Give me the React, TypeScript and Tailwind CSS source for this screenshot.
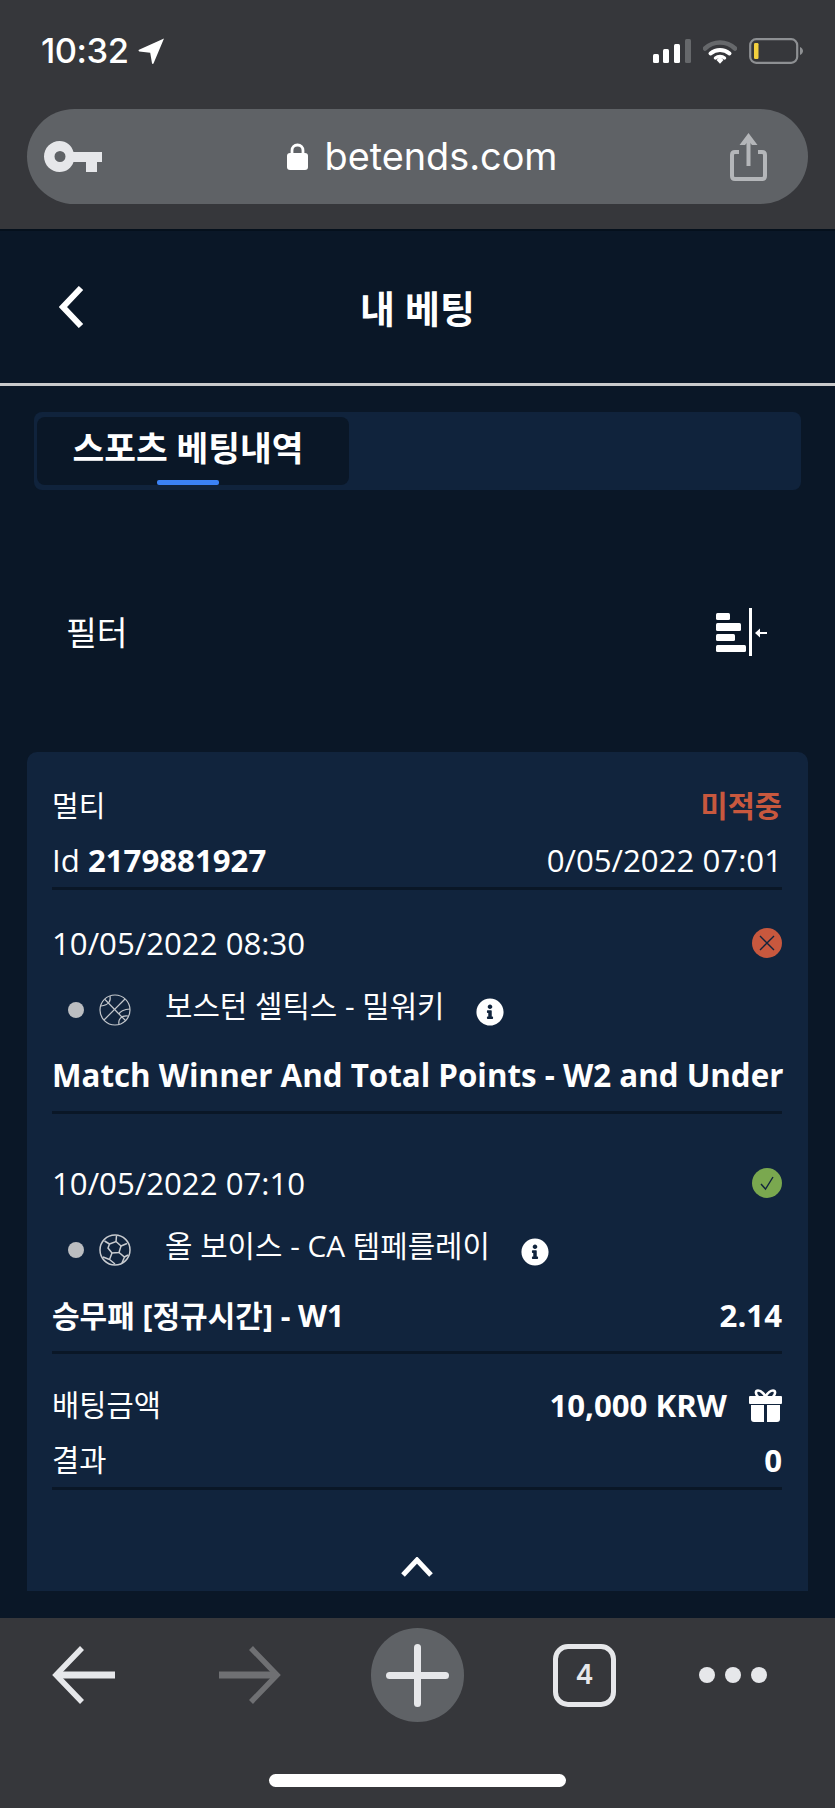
import React from "react";
import { FaInfoCircle } from "react-icons/fa";

const KO = "font-['Open_Sans','Noto_Sans_CJK_KR',sans-serif]";

function Signal() {
  return (
    <svg width="38" height="24" viewBox="0 0 38 24" aria-hidden="true">
      <rect x="0" y="15" width="6" height="9" rx="1.5" fill="#fff" />
      <rect x="10" y="10" width="6" height="14" rx="1.5" fill="#fff" />
      <rect x="21" y="5" width="6" height="19" rx="1.5" fill="#fff" />
      <rect x="32" y="0" width="6" height="24" rx="1.5" fill="#66686b" />
    </svg>
  );
}

function Wifi() {
  return (
    <svg width="34" height="25" viewBox="0 0 34 25" fill="none" aria-hidden="true">
      <path d="M2 9.5C10.5 1.5 23.5 1.5 32 9.5" stroke="#66686b" strokeWidth="4.5" strokeLinecap="round" />
      <path d="M7.5 14.5C13 9.7 21 9.7 26.5 14.5" stroke="#fff" strokeWidth="4" strokeLinecap="round" />
      <path d="M12.5 19C15 17 19 17 21.5 19" stroke="#fff" strokeWidth="3.5" strokeLinecap="round" />
      <path d="M13.5 21L17 17.5L20.5 21L17 24.8Z" fill="#fff" />
    </svg>
  );
}

function Battery() {
  return (
    <svg width="54" height="26" viewBox="0 0 54 26" fill="none" aria-hidden="true">
      <rect x="1.2" y="1.2" width="47" height="23.6" rx="6" stroke="#8e9093" strokeWidth="2.2" />
      <rect x="5" y="5" width="4.5" height="16" rx="1.2" fill="#f3d03e" />
      <path d="M51 9C53 10 54 11.5 54 13C54 14.5 53 16 51 17Z" fill="#8e9093" />
    </svg>
  );
}

function LocationArrow() {
  return (
    <svg width="27" height="26" viewBox="0 0 27 26" aria-hidden="true">
      <path d="M26 0.5L15.5 25.5C15.1 26.2 14.1 26 14 25.2L12.2 14.8L1.3 13.4C0.4 13.2 0.3 12.2 1 11.8Z" fill="#fff" />
    </svg>
  );
}

function KeyIcon() {
  return (
    <svg width="58" height="31" viewBox="0 0 58 31" aria-hidden="true">
      <path
        fillRule="evenodd"
        d="M15.5 0C22.5 0 27.5 4 29.5 11H58V21H53V31H42V21H29.5C27.5 27 22.5 31 15.5 31C7 31 0 24 0 15.5C0 7 7 0 15.5 0ZM16 10A5.5 5.5 0 1 0 16 21A5.5 5.5 0 1 0 16 10Z"
        fill="#e6e7ea"
      />
    </svg>
  );
}

function LockIcon() {
  return (
    <svg width="21" height="27" viewBox="0 0 21 27" fill="none" aria-hidden="true">
      <path d="M5 11V7.5C5 4.2 7.3 2 10.5 2C13.7 2 16 4.2 16 7.5V11" stroke="#fff" strokeWidth="2.8" />
      <rect x="0" y="10" width="21" height="17" rx="3" fill="#fff" />
    </svg>
  );
}

function ShareIcon() {
  return (
    <svg width="37" height="48" viewBox="0 0 37 48" fill="none" aria-hidden="true">
      <path d="M9 19H5C3 19 2 20 2 22V43C2 45 3 46 5 46H32C34 46 35 45 35 43V22C35 20 34 19 32 19H28" stroke="#b4b6b9" strokeWidth="4" />
      <path d="M18.5 33V4" stroke="#b4b6b9" strokeWidth="4" />
      <path d="M18.5 0L27.5 12H22L18.5 8L15 12H9.5Z" fill="#b4b6b9" />
    </svg>
  );
}

function FilterIcon() {
  return (
    <svg width="51" height="48" viewBox="0 0 51 48" aria-hidden="true">
      <rect x="0" y="5" width="14" height="7" rx="1.5" fill="#fff" />
      <rect x="0" y="15" width="25" height="8" rx="1.5" fill="#fff" />
      <rect x="0" y="26" width="19" height="7" rx="1.5" fill="#fff" />
      <rect x="0" y="37" width="30" height="7" rx="1.5" fill="#fff" />
      <rect x="33" y="0" width="3" height="48" fill="#fff" />
      <rect x="42" y="24" width="9" height="2" fill="#fff" />
      <path d="M39 25L44 20.5V29.5Z" fill="#fff" />
    </svg>
  );
}

function Basketball() {
  return (
    <svg width="32" height="32" viewBox="0 0 32 32" fill="none" stroke="#c3c7cc" strokeWidth="1.2" aria-hidden="true">
      <circle cx="16" cy="16" r="15" />
      <path d="M26 5L5 26" />
      <path d="M6 5.5L19 19L27 27" />
      <path d="M11 2C12 7 10 11 2 12" />
      <path d="M31 15C25 15 20.5 18 20 20" />
      <path d="M20 30C19 26 22 21 29 22" />
    </svg>
  );
}

function SoccerBall() {
  return (
    <svg width="32" height="32" viewBox="0 0 32 32" fill="none" stroke="#c9ccd0" strokeWidth="1.5" aria-hidden="true">
      <circle cx="16" cy="16" r="15" />
      <path d="M10.5 10L17 7.5L22 12L20 18.5L13 19L9 14Z" />
      <path d="M17 7.5L17.5 2M10.5 10L5.5 7M22 12L28 9.5M20 18.5L25.5 23L29 21M13 19L10.5 25.5L4 23M25.5 23L23 29M10.5 25.5L16 30" />
    </svg>
  );
}

function GiftIcon() {
  return (
    <svg width="33" height="33" viewBox="0 0 33 33" fill="none" aria-hidden="true">
      <path d="M16.5 7.5C14 3.5 11 1.5 9 1.5C6.5 1.5 6 5 9 7.5M16.5 7.5C19 3.5 22 1.5 24 1.5C26.5 1.5 27 5 24 7.5" stroke="#fff" strokeWidth="2.6" />
      <rect x="0" y="7" width="33" height="8" rx="1" fill="#fff" />
      <path d="M2 16H15V33H5C3 33 2 32 2 30Z" fill="#fff" />
      <path d="M18 16H31V30C31 32 30 33 28 33H18Z" fill="#fff" />
    </svg>
  );
}

function Chevron({ up }: { up?: boolean }) {
  return up ? (
    <svg width="32" height="20" viewBox="0 0 32 20" fill="none" aria-hidden="true">
      <path d="M2 18L16 3L30 18" stroke="#fff" strokeWidth="5" />
    </svg>
  ) : (
    <svg width="25" height="42" viewBox="0 0 25 42" fill="none" aria-hidden="true">
      <path d="M22 2L4 21L22 40" stroke="#fff" strokeWidth="6" />
    </svg>
  );
}

function StatusMark({ ok }: { ok?: boolean }) {
  return (
    <span className={`flex h-[30px] w-[30px] items-center justify-center rounded-full ${ok ? "bg-[#7aa84f]" : "bg-[#c8583e]"}`}>
      <svg width="20" height="20" viewBox="0 0 20 20" fill="none" stroke="#11243d" strokeWidth="1.4" aria-hidden="true">
        {ok ? <path d="M4 11L8.5 16L16 4" /> : <path d="M3 3L17 17M17 3L3 17" />}
      </svg>
    </span>
  );
}

function Rule() {
  return <div className="h-[3px] bg-[#0a1727]" />;
}

function Bet({
  first,
  date,
  ok,
  ball,
  teams,
  market,
  odds,
}: {
  first?: boolean;
  date: string;
  ok?: boolean;
  ball: React.ReactNode;
  teams: string;
  market: string;
  odds?: string;
}) {
  return (
    <div className={first ? "mt-[35px]" : "mt-[51px]"}>
      <div className="flex h-[36px] items-center justify-between">
        <span>{date}</span>
        <StatusMark ok={ok} />
      </div>
      <div className="mt-[33px] flex h-[32px] items-center pl-[16px]">
        <span className="h-[16px] w-[16px] rounded-full bg-[#bcbec1]" />
        <span className="ml-[15px]">{ball}</span>
        <span className="mb-[8px] ml-[34px] whitespace-nowrap text-[29.8px]">{teams}</span>
        <FaInfoCircle className="ml-[31px] mt-[4px] text-[28px] text-white" />
      </div>
      <div className="mt-[29px] flex h-[40px] items-center justify-between whitespace-nowrap font-bold">
        <span className={odds ? "text-[30px]" : "text-[31.3px]"}>{market}</span>
        {odds ? <span>{odds}</span> : null}
      </div>
      <div className="mt-[16px]">
        <Rule />
      </div>
    </div>
  );
}

export default function App() {
  return (
    <div className={`flex h-[1808px] w-[835px] flex-col overflow-hidden bg-[#0a1727] text-white ${KO}`}>
      {/* browser chrome */}
      <div className="flex h-[231px] shrink-0 flex-col border-b-2 border-[#05101c] bg-[#36373b] pt-[36px]">
        <div className="flex h-[30px] items-center justify-between pl-[41px] pr-[32px]">
          <div className="flex items-center gap-[10px]">
            <span className="font-['Inter',sans-serif] text-[34.5px] font-medium leading-none tracking-[-0.5px]">10:32</span>
            <LocationArrow />
          </div>
          <div className="flex items-center gap-[12px]">
            <Signal />
            <Wifi />
            <Battery />
          </div>
        </div>
        <div className="mx-[27px] mt-[43px] flex h-[95px] items-center rounded-full bg-[#5f6266] pl-[17px] pr-[41px]">
          <KeyIcon />
          <div className="flex flex-1 items-center justify-center gap-[17px] pl-[12px]">
            <LockIcon />
            <span className="font-['Inter',sans-serif] text-[37.8px] leading-none">betends.com</span>
          </div>
          <ShareIcon />
        </div>
      </div>

      {/* page header */}
      <div className="grid h-[155px] shrink-0 grid-cols-[1fr_auto_1fr] items-center border-b-[3px] border-[#c9cacb] px-[59px]">
        <Chevron />
        <h1 className="mt-[3px] text-[38px] font-bold">내 베팅</h1>
        <span />
      </div>

      {/* tabs */}
      <div className="mx-[34px] mt-[26px] flex h-[78px] shrink-0 rounded-[8px] bg-[#10233c] pb-[5px] pl-[3px] pt-[5px]">
        <div className="relative flex w-[312px] items-center justify-center rounded-[8px] bg-[#0a1727] pb-[6px] pr-[10px] text-[34.5px] font-bold">
          스포츠 베팅내역
          <span className="absolute bottom-0 left-[120px] h-[5px] w-[62px] rounded-[2px] bg-[#3b82f6]" />
        </div>
      </div>

      {/* filter */}
      <div className="flex h-[262px] shrink-0 items-center justify-between pl-[66px] pr-[68px] pt-[22px]">
        <span className="text-[33.5px]">필터</span>
        <FilterIcon />
      </div>

      {/* card */}
      <div className="mx-[27px] mb-[27px] flex flex-1 flex-col rounded-t-[10px] bg-[#11243d] pl-[25px] pr-[26px] pt-[36px] text-[31.2px]">
        <div className="flex h-[36px] items-center justify-between">
          <span className="text-[29px]">멀티</span>
          <span className="text-[29.5px] font-bold text-[#c8583e]">미적중</span>
        </div>
        <div className="mt-[18px] flex h-[36px] items-center justify-between">
          <span>
            Id <b className="font-bold">2179881927</b>
          </span>
          <span>0/05/2022 07:01</span>
        </div>
        <div className="mt-[9px]">
          <Rule />
        </div>

        <Bet
          first
          date="10/05/2022 08:30"
          ball={<Basketball />}
          teams="보스턴 셀틱스 - 밀워키"
          market="Match Winner And Total Points - W2 and Under"
        />
        <Bet
          ok
          date="10/05/2022 07:10"
          ball={<SoccerBall />}
          teams="올 보이스 - CA 템페를레이"
          market="승무패 [정규시간] - W1"
          odds="2.14"
        />

        <div className="mt-[33px] flex h-[36px] items-center justify-between">
          <span className="text-[29.6px]">배팅금액</span>
          <span className="flex items-center gap-[22px] font-bold">
            10,000 KRW
            <GiftIcon />
          </span>
        </div>
        <div className="mt-[19px] flex h-[36px] items-center justify-between">
          <span className="text-[29.6px]">결과</span>
          <span className="font-bold">0</span>
        </div>
        <div className="mt-[9px]">
          <Rule />
        </div>
        <div className="mb-[14px] mt-auto flex justify-center">
          <Chevron up />
        </div>
      </div>

      {/* browser toolbar */}
      <div className="flex h-[190px] shrink-0 flex-col bg-[#36373b]">
        <div className="mt-[10px] flex h-[94px] items-center pl-[52px]">
          <svg width="63" height="58" viewBox="0 0 63 58" fill="none" aria-hidden="true">
            <path d="M30 2L4 29L30 56" stroke="#e6e7ea" strokeWidth="5.5" />
            <path d="M4 29H63" stroke="#e6e7ea" strokeWidth="7" />
          </svg>
          <svg className="ml-[104px]" width="62" height="58" viewBox="0 0 62 58" fill="none" aria-hidden="true">
            <path d="M32 2L58 29L32 56" stroke="#6f7073" strokeWidth="5.5" />
            <path d="M0 29H58" stroke="#6f7073" strokeWidth="7" />
          </svg>
          <div className="ml-[90px] flex h-[94px] w-[93px] items-center justify-center rounded-full bg-[#5f6266]">
            <svg width="63" height="63" viewBox="0 0 63 63" aria-hidden="true">
              <rect x="28" y="0" width="7" height="63" rx="3.5" fill="#e6e7ea" />
              <rect x="0" y="28" width="63" height="7" rx="3.5" fill="#e6e7ea" />
            </svg>
          </div>
          <div className="ml-[89px] flex h-[63px] w-[63px] items-center justify-center rounded-[15px] border-[5px] border-[#e6e7ea] font-['Inter',sans-serif] text-[27px] font-semibold text-[#e6e7ea]">
            4
          </div>
          <div className="ml-[83px] flex w-[68px] items-center justify-between">
            <span className="h-[16px] w-[16px] rounded-full bg-[#e6e7ea]" />
            <span className="h-[16px] w-[16px] rounded-full bg-[#e6e7ea]" />
            <span className="h-[16px] w-[16px] rounded-full bg-[#e6e7ea]" />
          </div>
        </div>
        <div className="mt-[52px] h-[13px] w-[297px] self-center rounded-full bg-white" />
      </div>
    </div>
  );
}
